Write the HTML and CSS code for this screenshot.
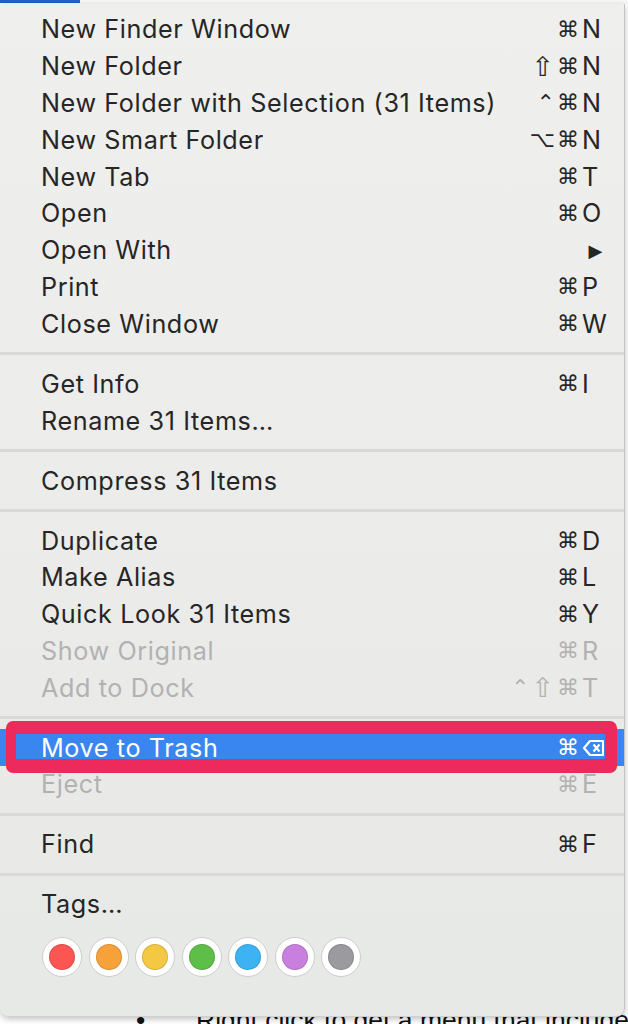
FILE: index.html
```html
<!DOCTYPE html>
<html>
<head>
<meta charset="utf-8">
<link rel="stylesheet" href="styles.css">
</head>
<body>
<div class="topbar"><div class="topbar-tab"></div></div>
<div class="menu">
  <div class="group">
    <div class="item"><span class="label">New Finder Window</span><span class="mods">⌘</span><span class="key">N</span></div>
    <div class="item"><span class="label">New Folder</span><span class="mods"><span class="shift">⇧</span>⌘</span><span class="key">N</span></div>
    <div class="item"><span class="label">New Folder with Selection (31 Items)</span><span class="mods">⌃⌘</span><span class="key">N</span></div>
    <div class="item"><span class="label">New Smart Folder</span><span class="mods">⌥⌘</span><span class="key">N</span></div>
    <div class="item"><span class="label">New Tab</span><span class="mods">⌘</span><span class="key">T</span></div>
    <div class="item"><span class="label">Open</span><span class="mods">⌘</span><span class="key">O</span></div>
    <div class="item"><span class="label">Open With</span><span class="arrow">▶</span></div>
    <div class="item"><span class="label">Print</span><span class="mods">⌘</span><span class="key">P</span></div>
    <div class="item"><span class="label">Close Window</span><span class="mods">⌘</span><span class="key">W</span></div>
  </div>
  <div class="sep"></div>
  <div class="group">
    <div class="item"><span class="label">Get Info</span><span class="mods">⌘</span><span class="key">I</span></div>
    <div class="item"><span class="label">Rename 31 Items…</span></div>
  </div>
  <div class="sep"></div>
  <div class="group">
    <div class="item"><span class="label">Compress 31 Items</span></div>
  </div>
  <div class="sep"></div>
  <div class="group">
    <div class="item"><span class="label">Duplicate</span><span class="mods">⌘</span><span class="key">D</span></div>
    <div class="item"><span class="label">Make Alias</span><span class="mods">⌘</span><span class="key">L</span></div>
    <div class="item"><span class="label">Quick Look 31 Items</span><span class="mods">⌘</span><span class="key">Y</span></div>
    <div class="item disabled"><span class="label">Show Original</span><span class="mods">⌘</span><span class="key">R</span></div>
    <div class="item disabled"><span class="label">Add to Dock</span><span class="mods">⌃<span class="shift">⇧</span>⌘</span><span class="key">T</span></div>
  </div>
  <div class="sep"></div>
  <div class="group">
    <div class="item active">
      <span class="label">Move to Trash</span><span class="mods">⌘</span><span class="key"><svg class="del" width="22" height="18" viewBox="0 0 22 18"><path d="M8 2 H21 V16 H8 L2 9 Z" fill="none" stroke="#fff" stroke-width="2.2" stroke-linejoin="round"/><path d="M11.5 5.5 L17.5 12.5 M17.5 5.5 L11.5 12.5" stroke="#fff" stroke-width="2.2"/></svg></span>
      <div class="callout"></div>
    </div>
    <div class="item disabled"><span class="label">Eject</span><span class="mods">⌘</span><span class="key">E</span></div>
  </div>
  <div class="sep"></div>
  <div class="group">
    <div class="item"><span class="label">Find</span><span class="mods">⌘</span><span class="key">F</span></div>
  </div>
  <div class="sep"></div>
  <div class="group">
    <div class="item"><span class="label">Tags…</span></div>
    <div class="tags">
      <span class="tag"><span class="dot red"></span></span>
      <span class="tag"><span class="dot orange"></span></span>
      <span class="tag"><span class="dot yellow"></span></span>
      <span class="tag"><span class="dot green"></span></span>
      <span class="tag"><span class="dot blue"></span></span>
      <span class="tag"><span class="dot purple"></span></span>
      <span class="tag"><span class="dot gray"></span></span>
    </div>
  </div>
</div>
<p class="note"><span class="bullet">•</span>Right click to get a menu that include</p>
</body>
</html>
```

FILE: styles.css
```css
html, body {
  margin: 0;
  padding: 0;
  background: #ffffff;
  overflow: hidden;
}

body {
  width: 628px;
  height: 1024px;
  font-family: Inter, "DejaVu Sans", sans-serif;
}

.topbar {
  height: 4px;
  background: #f7f7f7;
}

.topbar-tab {
  width: 80px;
  height: 3px;
  background: #2360c4;
}

.menu {
  position: relative;
  z-index: 1;
  width: 624px;
  padding: 7px 0 39px;
  background: linear-gradient(180deg, #efefee 0%, #ececea 45%, #e7e9e7 100%);
  border-right: 1px solid #c4c4c4;
  border-bottom: 1px solid #cfcfcf;
  border-radius: 0 0 9px 9px;
  box-shadow: 0 2px 6px rgba(0, 0, 0, 0.25);
  color: #262626;
  font-size: 25.2px;
  letter-spacing: 0.6px;
}

.item {
  position: relative;
  display: flex;
  align-items: center;
  height: 36.8px;
  padding: 0 18px 0 41px;
  white-space: nowrap;
}

.label {
  flex: 1;
}

.mods {
  display: flex;
  align-items: center;
  font-family: "DejaVu Sans", sans-serif;
  font-size: 22px;
  letter-spacing: 2px;
}

.shift {
  font-size: 27px;
  margin-right: 1px;
}

.key {
  display: flex;
  align-items: center;
  width: 24px;
  margin-left: 1px;
  letter-spacing: 0;
}

.arrow {
  font-family: "DejaVu Sans", sans-serif;
  font-size: 18px;
  margin-right: 3px;
}

.disabled {
  color: #b2b2b2;
}

.active {
  background: #3a86f0;
  color: #ffffff;
}

.del {
  display: block;
}

.callout {
  position: absolute;
  left: 6px;
  right: 7px;
  top: -8px;
  bottom: -7px;
  border-style: solid;
  border-color: #ee2a5c;
  border-width: 13px 12px 14px 10px;
  border-radius: 7px;
}

.sep {
  height: 3px;
  margin: 10px 0 10.2px;
  background: #d9d9d8;
}

.tags {
  display: flex;
  gap: 6.5px;
  padding: 14px 0 0 42px;
}

.tag {
  display: flex;
  align-items: center;
  justify-content: center;
  width: 38px;
  height: 38px;
  border-radius: 50%;
  background: #ffffff;
  border: 1px solid #cdcdcd;
}

.dot {
  width: 26px;
  height: 26px;
  border-radius: 50%;
  box-sizing: border-box;
  border: 1px solid rgba(0, 0, 0, 0.12);
}

.red { background: #fc5652; }
.orange { background: #f7a13a; }
.yellow { background: #f4c842; }
.green { background: #5dbf48; }
.blue { background: #3db3f4; }
.purple { background: #c97fde; }
.gray { background: #9b9b9f; }

.note {
  margin: -12px 0 0;
  padding-left: 136px;
  font-family: "Liberation Sans", Arial, sans-serif;
  font-size: 26.5px;
  line-height: 30px;
  color: #111111;
  white-space: nowrap;
}

.bullet {
  display: inline-block;
  width: 60px;
}
```
